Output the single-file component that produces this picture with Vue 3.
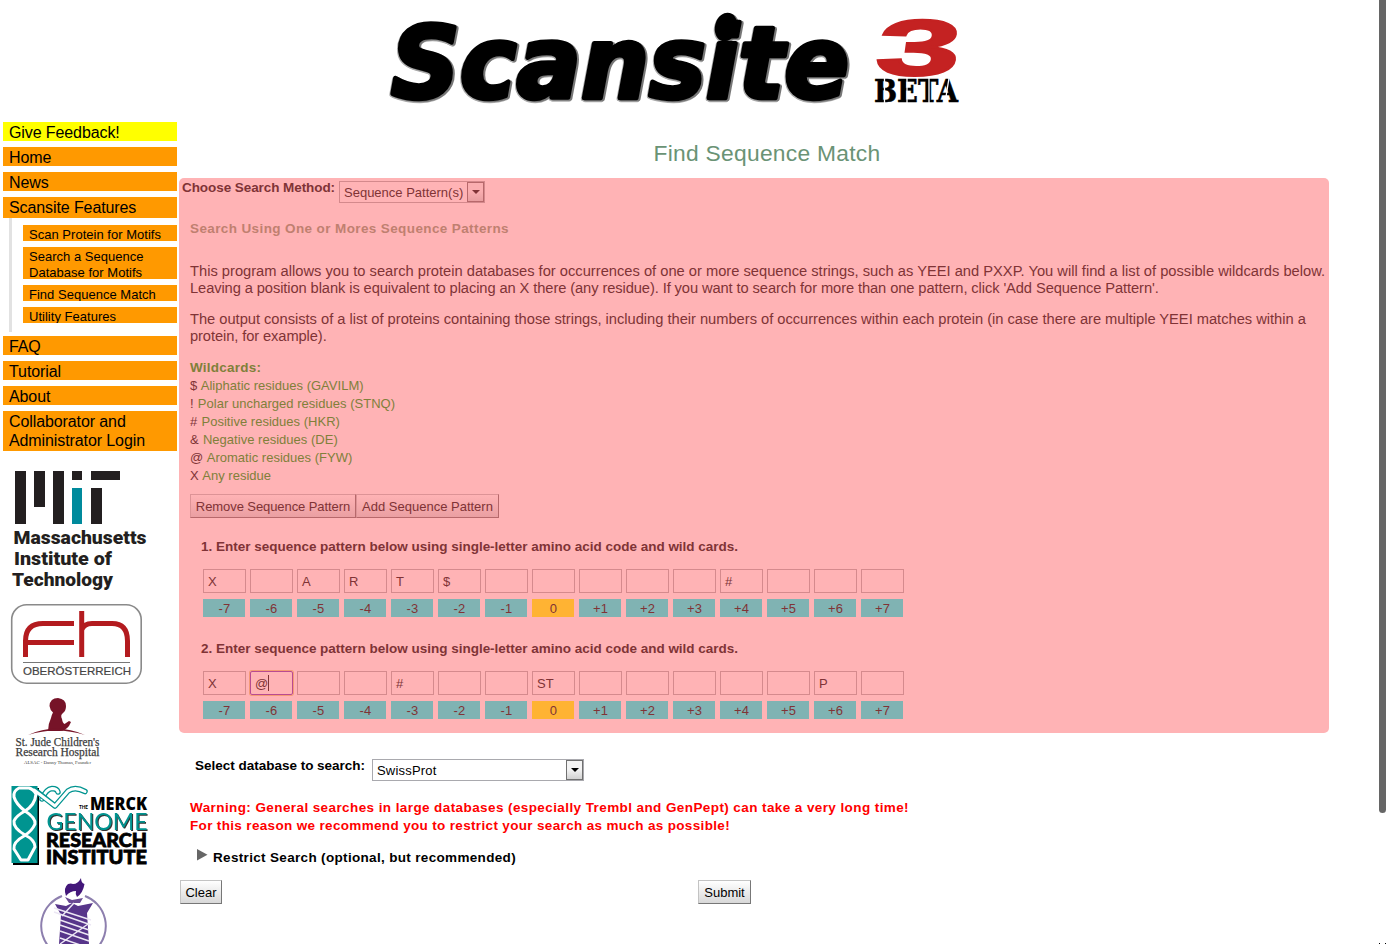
<script setup>
const topNav = [
  { lines: ['Give Feedback!'], kind: 'feedback' },
  { lines: ['Home'] },
  { lines: ['News'] },
  { lines: ['Scansite Features'], kind: 'open' },
]
const subNav = [
  ['Scan Protein for Motifs'],
  ['Search a Sequence', 'Database for Motifs'],
  ['Find Sequence Match'],
  ['Utility Features'],
]
const lowerNav = [
  { lines: ['FAQ'] },
  { lines: ['Tutorial'] },
  { lines: ['About'] },
  { lines: ['Collaborator and', 'Administrator Login'], kind: 'login' },
]
const wildcards = [
  ['$', 'Aliphatic residues (GAVILM)'],
  ['!', 'Polar uncharged residues (STNQ)'],
  ['#', 'Positive residues (HKR)'],
  ['&', 'Negative residues (DE)'],
  ['@', 'Aromatic residues (FYW)'],
  ['X', 'Any residue'],
]
const positions = ['-7', '-6', '-5', '-4', '-3', '-2', '-1', '0', '+1', '+2', '+3', '+4', '+5', '+6', '+7']
const patterns = [
  { id: 1, focus: -1, values: ['X', '', 'A', 'R', 'T', '$', '', '', '', '', '', '#', '', '', ''] },
  { id: 2, focus: 1, values: ['X', '@', '', '', '#', '', '', 'ST', '', '', '', '', '', 'P', ''] },
]
</script>

<template>
  <div class="page">
    <header>
      <svg class="wordmark" width="600" height="115" viewBox="380 0 600 115">
        <g class="scansite">
          <text x="391" y="97.500" textLength="458" lengthAdjust="spacingAndGlyphs">Scansite</text>
          <ellipse cx="726" cy="27" rx="11" ry="14.500" transform="rotate(15 726 27)" />
        </g>
        <text class="three" transform="translate(873 75) skewX(-8) scale(1.92 1)" x="0" y="0">3</text>
        <text class="beta" x="874" y="102" textLength="84" lengthAdjust="spacingAndGlyphs">BETA</text>
        <path d="M884.500 78v25M907 78v25M929 78v25M949 78l-4 25" stroke="#fff" stroke-width="1.300" />
      </svg>
    </header>

    <div class="body">
      <aside>
        <nav>
          <a v-for="n in topNav" :key="n.lines[0]" class="item" :class="n.kind">
            <span v-for="l in n.lines" :key="l">{{ l }}</span>
          </a>
          <div class="subnav">
            <a v-for="s in subNav" :key="s[0]" class="subitem">
              <span v-for="l in s" :key="l">{{ l }}</span>
            </a>
          </div>
          <a v-for="n in lowerNav" :key="n.lines[0]" class="item" :class="n.kind">
            <span v-for="l in n.lines" :key="l">{{ l }}</span>
          </a>
        </nav>

        <svg class="logo" width="177" height="134" viewBox="0 460 177 134">
          <g fill="#231f20">
            <path d="M15 471h11v53H15zM34 471h11v36H34zM53 471h11v53H53zM72 471h10v9H72zM91 471h29v9H91zM91 488h11v36H91z" />
            <path d="M72 488h10v36H72z" fill="#008a9c" />
            <g class="mit">
              <text x="13.500" y="544" textLength="133" lengthAdjust="spacingAndGlyphs">Massachusetts</text>
              <text x="14" y="565" textLength="98" lengthAdjust="spacingAndGlyphs">Institute of</text>
              <text x="12" y="586" textLength="101" lengthAdjust="spacingAndGlyphs">Technology</text>
            </g>
          </g>
        </svg>

        <svg class="logo" width="177" height="98" viewBox="0 594 177 98">
          <rect x="11.700" y="604.700" width="129.500" height="78.500" rx="15" fill="#fff" stroke="#8a8a8a" stroke-width="1.600" />
          <g fill="none" stroke="#b31b1f" stroke-width="5">
            <path d="M25.500 657V641Q25.500 623.500 43 623.500H74M25.500 642.500H74" />
            <path d="M81.700 611V657M81.700 630Q84 623.500 92 623.500H112Q127.500 623.500 127.500 641V657" />
          </g>
          <path d="M23 662.500H130" stroke="#777" stroke-width="1" />
          <text class="ober" x="23" y="675" textLength="108" lengthAdjust="spacingAndGlyphs">OBERÖSTERREICH</text>
        </svg>

        <svg class="logo" width="177" height="84" viewBox="0 692 177 84">
          <g fill="#761328">
            <path d="M49.500 706Q50 698 58 698Q66 699 66 706Q66 711 63 713Q60 715 62 719Q62.500 723 64.500 724L69 721L71 722L69 726Q65 731 60 731L48 731Q48 724 51 718Q52 714 53 712.500Q50 710 49.500 706Z" />
            <path d="M28 735Q56 722 85 735Q56 726 28 735Z" />
          </g>
          <g class="jude">
            <text x="15.500" y="746" textLength="84" lengthAdjust="spacingAndGlyphs">St. Jude Children's</text>
            <text x="15.500" y="756" textLength="84" lengthAdjust="spacingAndGlyphs">Research Hospital</text>
            <text class="tiny" x="24" y="763.500" textLength="67" lengthAdjust="spacingAndGlyphs">ALSAC - Danny Thomas, Founder</text>
          </g>
        </svg>

        <svg class="logo" width="177" height="96" viewBox="0 776 177 96">
          <path d="M13 788h26v77H13z" fill="#000" />
          <path d="M11.500 786h26v77h-26z" fill="#009490" />
          <g fill="none" stroke-linecap="round" stroke-linejoin="round">
            <path d="M42 799Q46 789 52 788.500Q57 788.500 58 792" stroke="#009490" stroke-width="5.500" />
            <path d="M42 799Q46 789 52 788.500Q57 788.500 58 792" stroke="#fff" stroke-width="3" />
            <path d="M36 791L55 806L68 791Q75 786 85 791.500" stroke="#009490" stroke-width="5.500" />
            <path d="M34 790L55 806L68 791Q75 786 85 791.500" stroke="#fff" stroke-width="3" />
            <path d="M36 794Q33 789 29 788H19Q13 791 14 797Q16 804 25 811Q36 818 35 824Q32 831 24 836Q13 842 14 849L21 860H28L35 847Q35 840 25 835Q13 828 14 821Q16 816 25 811Q35 805 36 794" stroke="#fff" stroke-width="3" />
          </g>
          <g class="merck">
            <text class="the" x="79" y="809" textLength="9" lengthAdjust="spacingAndGlyphs">THE</text>
            <text x="90" y="809.500" textLength="57" lengthAdjust="spacingAndGlyphs" class="name">MERCK</text>
            <text x="46.500" y="830" textLength="101" lengthAdjust="spacingAndGlyphs" class="genome">GENOME</text>
            <text x="46" y="846.500" textLength="101" lengthAdjust="spacingAndGlyphs" class="inst">RESEARCH</text>
            <text x="46" y="863.500" textLength="101" lengthAdjust="spacingAndGlyphs" class="inst">INSTITUTE</text>
          </g>
        </svg>

        <svg class="logo" width="177" height="72" viewBox="0 872 177 72">
          <path d="M62 896A32 32 0 0 0 50 948M85 896A32 32 0 0 1 97 948" fill="none" stroke="#8d7fae" stroke-width="2" />
          <path d="M66 896Q63 888 68 884Q71 883 73 884Q78 884 81 878Q81 883 84.500 884Q83 893 77 897Q75 894 76 891Q70 891 66 896Z" fill="#43177a" />
          <path d="M65 897L72 900L83 898L80 903H69Z" fill="#6a4a94" />
          <path d="M55 904L66 906L72 903L78 906L93 903L87 913L89 944H59L61 915Z" fill="#57358a" />
          <path d="M54 908L91 920M54 912L91 925M60 920L89 930M60 925L89 935M60 938L89 948M60 931L89 941M74 903L62 916M88 924L60 944" stroke="#ece7f4" stroke-width="1.500" />
        </svg>
      </aside>

      <main>
        <h1>Find Sequence Match</h1>

        <section class="panel">
          <div class="method">
            <label>Choose Search Method:</label>
            <span class="select tinted"><span>Sequence Pattern(s)</span><i class="drop"><i class="caret" /></i></span>
          </div>
          <h2>Search Using One or Mores Sequence Patterns</h2>
          <p>
            <span>This program allows you to search protein databases for occurrences of one or more sequence strings, such as YEEI and PXXP. You will find a list of possible wildcards below.</span>
            <span class="tight">Leaving a position blank is equivalent to placing an X there (any residue). If you want to search for more than one pattern, click 'Add Sequence Pattern'.</span>
          </p>
          <p>
            <span class="t3">The output consists of a list of proteins containing those strings, including their numbers of occurrences within each protein (in case there are multiple YEEI matches within a</span>
            <span class="tight">protein, for example).</span>
          </p>
          <div class="wild">
            <strong>Wildcards:</strong>
            <div v-for="w in wildcards" :key="w[0]"><b>{{ w[0] }}</b> {{ w[1] }}</div>
          </div>
          <div class="buttons">
            <button class="tinted">Remove Sequence Pattern</button>
            <button class="tinted add">Add Sequence Pattern</button>
          </div>
          <div v-for="p in patterns" :key="p.id" class="pattern">
            <h3>{{ p.id }}. Enter sequence pattern below using single-letter amino acid code and wild cards.</h3>
            <div class="cells">
              <div v-for="(v, i) in p.values" :key="i" class="cell">
                <div class="box" :class="{ focus: p.focus === i }">{{ v }}<i v-if="p.focus === i" class="cursor" /></div>
                <div class="pos" :class="{ center: positions[i] === '0' }">{{ positions[i] }}</div>
              </div>
            </div>
          </div>
        </section>

        <div class="database">
          <label>Select database to search:</label>
          <span class="select"><span>SwissProt</span><i class="drop"><i class="caret" /></i></span>
        </div>
        <div class="warning">
          <div>Warning: General searches in large databases (especially Trembl and GenPept) can take a very long time!</div>
          <div class="second">For this reason we recommend you to restrict your search as much as possible!</div>
        </div>
        <div class="restrict">
          <svg width="11" height="12" viewBox="0 0 11 12"><path d="M0 0L10.500 5.700L0 11.500Z" fill="#666" /></svg>
          <span>Restrict Search (optional, but recommended)</span>
        </div>
        <div class="actions">
          <button class="clear">Clear</button>
          <button class="submit">Submit</button>
        </div>
      </main>
    </div>
    <div class="thumb" />
    <div class="grip" />
  </div>
</template>

<style>
body { background: #fff; overflow: hidden; }
</style>

<style scoped>
* { box-sizing: border-box; }
.page { position: relative; width: 1386px; height: 944px; overflow: hidden; font: 13px/18px "Liberation Sans", Arial, sans-serif; color: #000; background: #fff; }
header { height: 115px; padding-left: 380px; }
svg { display: block; }
.scansite { filter: drop-shadow(2px 1px .5px #777) drop-shadow(-1px 1px .5px #aaa); }
.scansite text { font: italic 700 99px "DejaVu Sans", sans-serif; fill: #000; stroke: #000; stroke-width: 4.500px; stroke-linejoin: round; }
.three { font: 700 79px "Liberation Sans", sans-serif; fill: #c42222; stroke: #c42222; stroke-width: 2px; }
.beta { font: 700 32px "DejaVu Serif", serif; stroke: #000; stroke-width: .6px; }
.body { display: flex; }
aside { width: 179px; height: 829px; padding: 7px 2px 0 0; overflow: hidden; flex: none; }
nav { padding-left: 3px; height: 338px; }
.item { display: block; height: 19px; margin-bottom: 6px; padding-left: 6px; background: #f90; font-size: 16px; line-height: 19px; letter-spacing: -.1px; overflow: hidden; }
.item span, .subitem span { display: block; white-space: nowrap; position: relative; top: 1px; }
.subitem span { top: 2px; }
.feedback { background: #ff0; }
.open { height: 21px; margin-bottom: 0; }
.login { height: 40px; margin-bottom: 0; }
.subnav { margin: 0 0 4px 6px; border-left: 3px solid #e2e2e2; height: 114px; padding: 7px 0 0 11px; }
.subitem { display: block; background: #f90; padding-left: 6px; line-height: 16px; font-size: 13px; letter-spacing: .02px; margin-bottom: 6px; overflow: hidden; }
.mit text { font: 900 17.500px Roboto, sans-serif; }
.ober { font: 400 11.500px "Liberation Sans", sans-serif; fill: #444; stroke: #444; stroke-width: .2px; }
.jude text { font: 400 12px "Liberation Serif", serif; fill: #3c3c3c; stroke: #3c3c3c; stroke-width: .25px; }
.jude .tiny { font-size: 5px; stroke: none; }
.merck text { font-family: Lato, sans-serif; font-weight: 900; fill: #000; }
.merck .the { font-size: 6px; }
.merck .name { font-family: "Open Sans", sans-serif; font-weight: 800; font-size: 18px; }
.merck .genome { font-weight: 400; font-size: 24px; fill: #009490; filter: drop-shadow(1px 1px 0 #333); }
.merck .inst { font-size: 19.500px; stroke: #000; stroke-width: .8px; }
main { flex: none; width: 1150px; }
h1 { margin: 25px 0 0; height: 38px; padding-left: 26px; text-align: center; line-height: 26px; font-size: 22.800px; font-weight: 400; letter-spacing: .27px; color: #6a9375; }
.panel { height: 555px; border-radius: 5px; background: #ffb3b5; color: #803336; padding: 3px 0 0 11px; }
.method { display: flex; margin-left: -8px; height: 40px; }
.method label { font-size: 13.500px; font-weight: 700; letter-spacing: -.07px; line-height: 14px; width: 157px; white-space: nowrap; }
.select { display: flex; justify-content: space-between; height: 22px; width: 212px; border: 1px solid #a9a9ae; padding: 0 0 0 4px; line-height: 22px; background: #fff; letter-spacing: .2px; }
.select.tinted { width: 146px; background: transparent; border-color: #d4898c; letter-spacing: 0; }
.drop { width: 17px; height: 20px; border: 1px solid #707070; background: linear-gradient(#f4f4f4 45%, #d2d2d2); display: flex; align-items: center; justify-content: center; }
.tinted .drop { border-color: #b7686b; background: linear-gradient(#faaeb0 45%, #e89ea0); }
.caret { border: 4px solid transparent; border-top-color: #000; border-bottom: 0; }
.tinted .caret { border-top-color: #803336; }
h2 { margin: -2px 0 0; font-size: 13.500px; line-height: 20px; letter-spacing: .386px; color: #bf8070; height: 44px; }
p { margin: 0 0 14px; font-size: 14.700px; line-height: 17px; }
p span { display: block; white-space: nowrap; }
.tight { letter-spacing: -.098px; }
.t3 { letter-spacing: -.023px; }
.wild { color: #80803a; margin-top: 14px; height: 135px; letter-spacing: .02px; }
.wild strong { display: block; font-size: 13.500px; letter-spacing: .22px; line-height: 18px; }
.wild b { font-weight: 400; color: #803336; margin-right: .6px; }
.buttons { display: flex; height: 24px; }
button { font: 13px/22px "Liberation Sans", Arial, sans-serif; height: 24px; padding: 1px 0 0; text-align: center; white-space: nowrap; border: 1px solid #c3c3c3; border-right-color: #777; border-bottom-color: #777; background: linear-gradient(#fff, #d8d8d8); color: #000; }
button.tinted { width: 166px; padding: 0; border-color: #dd9396 #b7686b #b7686b #dd9396; line-height: 23px; background: linear-gradient(#ffb3b5, #ea9fa2); color: #803336; letter-spacing: -.08px; }
button.add { width: 143px; letter-spacing: 0; }
.pattern { height: 102px; padding-top: 19px; }
h3 { margin: 0 0 12px 11px; line-height: 20px; font-size: 13.500px; letter-spacing: -.01px; }
.cells { display: flex; padding-left: 13px; }
.cell { width: 47px; }
.box { width: 43px; height: 24px; border: 1px solid #d58a8d; padding-left: 4px; line-height: 23px; display: flex; align-items: center; }
.focus { border-color: #b94b91; border-radius: 2px; box-shadow: 0 0 0 1px #f49a75; }
.cursor { width: 1px; height: 16px; background: #803336; }
.pos { width: 42px; height: 18px; margin-top: 6px; background: #80b3b3; text-align: center; line-height: 19px; letter-spacing: .2px; padding-left: 1px; }
.center { background: #ffb333; }
.database { display: flex; margin: 26px 0 0 16px; }
.database label { width: 177px; font-size: 13.500px; font-weight: 700; letter-spacing: -.01px; line-height: 14px; white-space: nowrap; }
.warning { margin: 18px 0 0 11px; color: #f00; font-weight: 700; font-size: 13.500px; letter-spacing: .408px; white-space: nowrap; }
.second { letter-spacing: .339px; }
.restrict { display: flex; margin: 13px 0 0 18px; height: 20px; font-weight: 700; font-size: 13.500px; letter-spacing: .33px; line-height: 20px; }
.restrict svg { margin: 1px 5px 0 0; }
.actions { display: flex; justify-content: space-between; width: 571px; margin: 12px 0 0 1px; }
.clear { width: 42px; }
.submit { width: 53px; }
.thumb { position: absolute; right: 0; top: 0; width: 7px; height: 813px; background: #666; border-radius: 0 0 4px 4px; }
.grip { position: absolute; right: 0; bottom: 0; width: 7px; height: 1px; border: solid #000; border-width: 0 1px; }
</style>
